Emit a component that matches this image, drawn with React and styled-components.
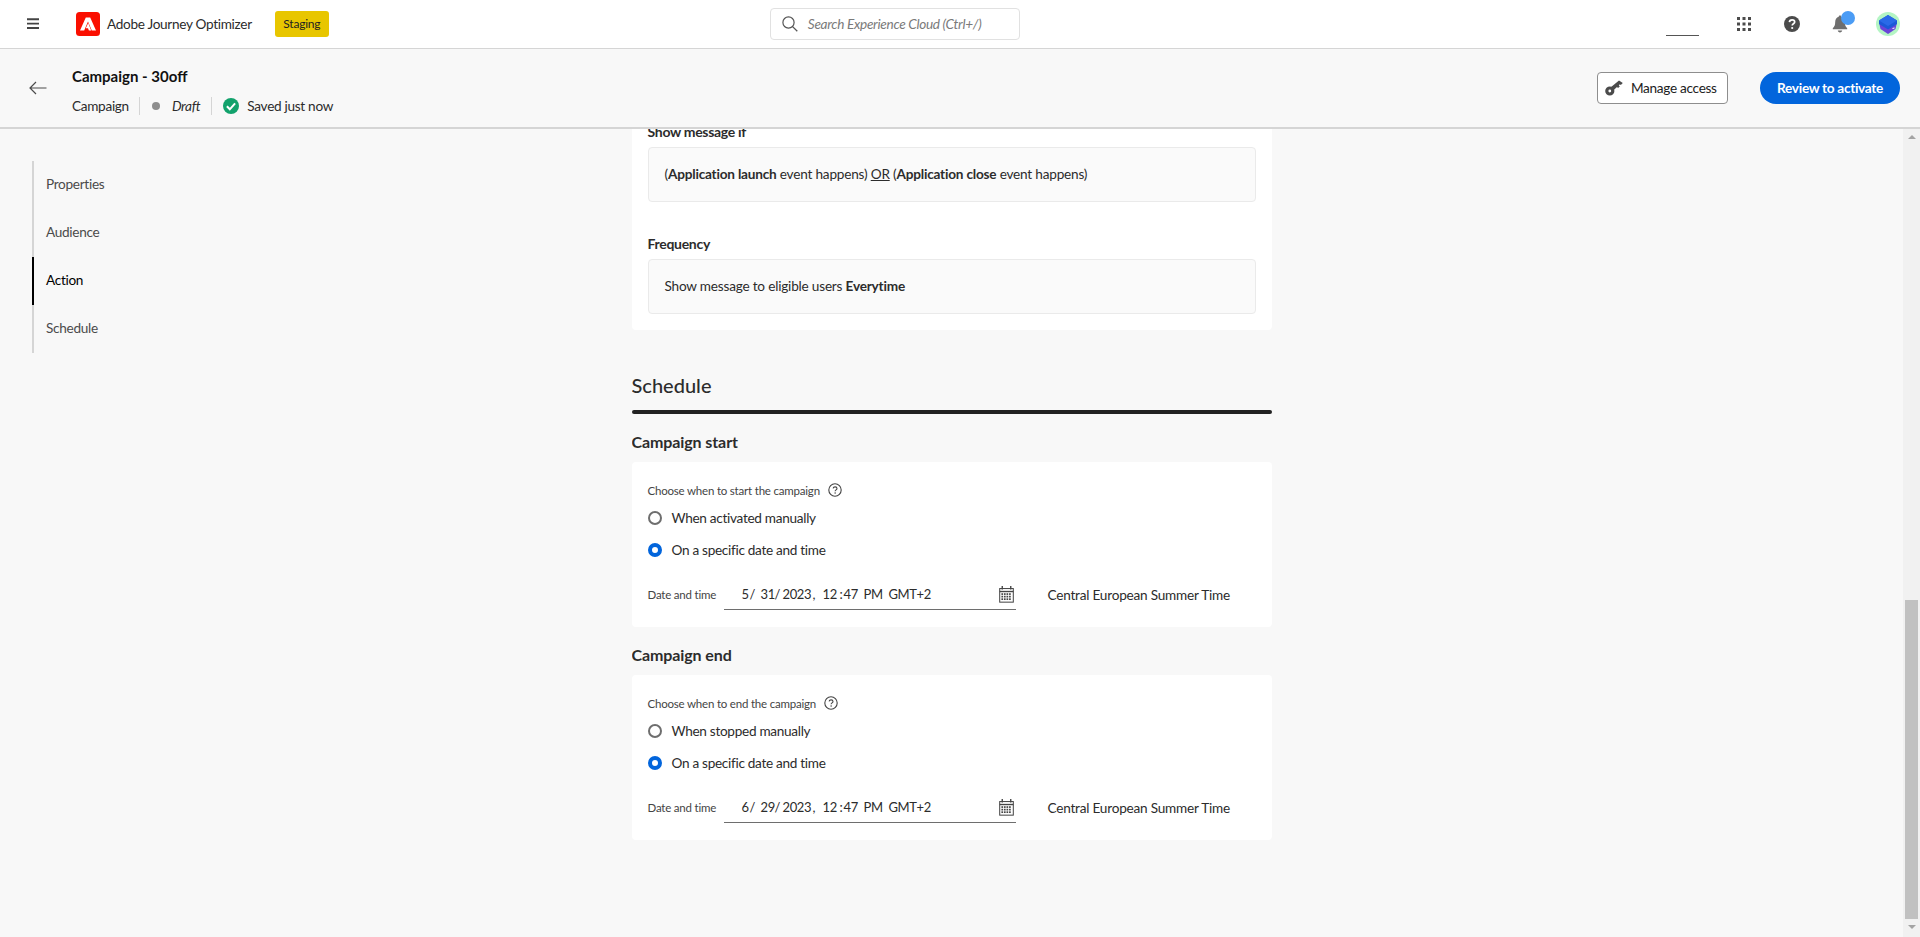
import React from "react"
import styled, { createGlobalStyle, css } from "styled-components"

const GlobalStyle = createGlobalStyle`
  html, body, #root {
    margin: 0;
    height: 100%;
  }
  body {
    font-family: "Lato", "Noto Sans", sans-serif;
    color: #2c2c2c;
    background: #f8f8f8;
  }
  * {
    box-sizing: border-box;
  }
`

// Lato runs wider than the font in the screenshot
const uiText = css`
  font-size: 13.6px;
  letter-spacing: -0.3px;
`

const smallText = css`
  font-size: 11.5px;
  letter-spacing: -0.2px;
`

const CalendarIcon = () => (
  <svg width="17" height="17" viewBox="0 0 18 20" fill="none">
    <path d="M4 0v4M14 0v4" stroke="#444" strokeWidth="1.6" />
    <rect x="1" y="3" width="16" height="16" fill="none" stroke="#444" strokeWidth="1.2" />
    <path d="M1 6.500h16" stroke="#444" strokeWidth="1.6" />
    {[8.5, 11.5, 14.5].map(y =>
      [3, 6, 9, 12].map(x => <rect key={`${x}-${y}`} x={x} y={y} width="2" height="2" fill="#444" />)
    )}
  </svg>
)

const InfoIcon = () => (
  <svg width="14" height="14" viewBox="0 0 14 14" fill="none">
    <circle cx="7" cy="7" r="6.200" stroke="#444" strokeWidth="1.1" />
    <path d="M5.100 5.400c.2-1 1-1.500 2-1.500 1.100 0 1.900.7 1.900 1.600 0 1.400-1.900 1.400-1.900 2.800" stroke="#444" strokeWidth="1.1" />
    <circle cx="7.100" cy="10.100" r=".75" fill="#444" />
  </svg>
)

const SchedulePicker = ({ name, question, manualLabel, month, day }) => (
  <>
    <SubHeading>{name}</SubHeading>
    <Card>
      <Question>{question}<InfoIcon /></Question>
      <RadioRow><Radio /><span>{manualLabel}</span></RadioRow>
      <RadioRow><Radio $checked /><span>On a specific date and time</span></RadioRow>
      <DateRow>
        <DateLabel>Date and time</DateLabel>
        <DateField>
          <DateText>
            <Segment $w={8}>{month}</Segment>
            <Segment $w={6}>/</Segment>
            <Segment $w={14} $gap={5}>{day}</Segment>
            <Segment $w={7}>/</Segment>
            <Segment $w={29} $gap={1}>2023</Segment>
            <Segment $w={10} $gap={1}>,</Segment>
            <Segment $w={16}>12</Segment>
            <Segment $w={4} $gap={1}>:</Segment>
            <Segment $w={16}>47</Segment>
            <Segment $w={20} $gap={4}>PM</Segment>
            <Segment $w={44} $gap={5}>GMT+2</Segment>
          </DateText>
          <CalendarIcon />
        </DateField>
        <TimeZone>Central European Summer Time</TimeZone>
      </DateRow>
    </Card>
  </>
)

const App = () => (
  <Page>
    <GlobalStyle />
    <TopBar>
      <MenuIcon width="14" height="12" viewBox="0 0 14 12">
        <path d="M1 1.200h12M1 5.600h12M1 10h12" stroke="#444" strokeWidth="1.9" />
      </MenuIcon>
      <svg width="24" height="24" viewBox="0 0 24 24">
        <rect width="24" height="24" rx="3.500" fill="#fa0f00" />
        <path d="M9.800 5.500h4.400L20 18.500h-4.200L12 9.500l-3.800 9H4z" fill="#fff" />
        <path d="M12.200 11l3 7.500h-2.300l-.9-2.300H9.800z" fill="#fff" />
      </svg>
      <ProductName>Adobe Journey Optimizer</ProductName>
      <EnvBadge>Staging</EnvBadge>
      <SearchBox>
        <svg width="16" height="16" viewBox="0 0 16 16" fill="none">
          <circle cx="6.500" cy="6.500" r="5.600" stroke="#555" strokeWidth="1.2" />
          <path d="M10.600 10.600l4.700 4.700" stroke="#555" strokeWidth="1.3" />
        </svg>
        <SearchHint>Search Experience Cloud (Ctrl+/)</SearchHint>
      </SearchBox>
      <TopActions>
        <UserStub />
        <AppsIcon width="16" height="16" viewBox="0 0 16 16">
          {[1, 6.5, 12].map(y =>
            [1, 6.5, 12].map(x => <rect key={`${x}-${y}`} x={x} y={y} width="3" height="3" fill="#4b4b4b" />)
          )}
        </AppsIcon>
        <HelpIcon width="16" height="16" viewBox="0 0 16 16">
          <circle cx="8" cy="8" r="8" fill="#4b4b4b" />
          <path d="M5.400 6.100c.1-1.500 1.200-2.300 2.700-2.300 1.500 0 2.600.9 2.600 2.100 0 1.900-2.500 1.800-2.500 3.600" fill="none" stroke="#fff" strokeWidth="1.7" />
          <circle cx="8.200" cy="12" r="1.100" fill="#fff" />
        </HelpIcon>
        <BellWrap>
          <svg width="16" height="18" viewBox="0 0 16 18">
            <path d="M8 .5c.8 0 1.300.5 1.300 1.200 2.400.6 3.500 2.700 3.500 5.300 0 3 .8 4.600 2.400 6.300v.9H.8v-.9C2.400 11.600 3.200 10 3.200 7c0-2.600 1.100-4.700 3.500-5.300C6.700 1 7.200.5 8 .5z" fill="#6e6e6e" />
            <path d="M5.800 15.500h4.400c0 1.100-1 1.900-2.200 1.900s-2.200-.8-2.200-1.900z" fill="#6e6e6e" />
          </svg>
          <BellDot />
        </BellWrap>
        <svg width="24" height="24" viewBox="0 0 24 24">
          <circle cx="12" cy="12" r="12" fill="#b4f5c4" />
          <path d="M12 14l-9 -3.500 1.500 6.500L12 22l7.500-5 1.500-6.500z" fill="#6a45d8" />
          <path d="M12 3l9 5.500v3.500L12 17.500 3 12V8.500z" fill="#1c58d8" />
          <path d="M12 3l9 5.500-9 5.500-9-5.500z" fill="#2a6ae8" />
          <path d="M16 16.500l2-1 1 .6-2 1z" fill="#fff" />
        </svg>
      </TopActions>
    </TopBar>

    <SubBar>
      <BackIcon width="18" height="14" viewBox="0 0 18 14" fill="none">
        <path d="M17.500 7H1M7 1L1 7l6 6" stroke="#4b4b4b" strokeWidth="1.2" />
      </BackIcon>
      <TitleBlock>
        <Title>Campaign - 30off</Title>
        <MetaRow>
          <MetaItem>Campaign</MetaItem>
          <MetaItem $gap={12}>
            <StatusDot />
            <em>Draft</em>
          </MetaItem>
          <MetaItem $gap={8}>
            <svg width="16" height="16" viewBox="0 0 16 16">
              <circle cx="8" cy="8" r="8" fill="#12a26c" />
              <path d="M3.900 8.300l2.900 3 5.300-6" fill="none" stroke="#fff" strokeWidth="2" />
            </svg>
            Saved just now
          </MetaItem>
        </MetaRow>
      </TitleBlock>
      <ManageButton>
        <svg width="18" height="16" viewBox="0 0 18 16">
          <circle cx="4.800" cy="11" r="3" fill="none" stroke="#4b4b4b" strokeWidth="3.200" />
          <path d="M5.500 7.500L14 .5 17.800 3 15.800 5 14.800 4.200 13.800 5.400 14.800 6.500 13 8 12 6.900 8.500 10.300z" fill="#4b4b4b" />
        </svg>
        Manage access
      </ManageButton>
      <ReviewButton>Review to activate</ReviewButton>
    </SubBar>

    <Body>
      <Workspace>
        <SideColumn>
          <SideNav>
            <NavItem>Properties</NavItem>
            <NavItem>Audience</NavItem>
            <NavItem $active>Action</NavItem>
            <NavItem>Schedule</NavItem>
          </SideNav>
        </SideColumn>
        <MainColumn>
          <ActionCard>
            <FieldLabel>Show message if</FieldLabel>
            <ReadOnlyBox>
              <span>(<b>Application launch</b> event happens) <u>OR</u> (<b>Application close</b> event happens)</span>
            </ReadOnlyBox>
            <FieldLabel $spaced>Frequency</FieldLabel>
            <ReadOnlyBox>
              <span>Show message to eligible users <b>Everytime</b></span>
            </ReadOnlyBox>
          </ActionCard>
          <SectionTitle>Schedule</SectionTitle>
          <SectionRule />
          <SchedulePicker
            name="Campaign start"
            question="Choose when to start the campaign"
            manualLabel="When activated manually"
            month="5"
            day="31"
          />
          <SchedulePicker
            name="Campaign end"
            question="Choose when to end the campaign"
            manualLabel="When stopped manually"
            month="6"
            day="29"
          />
        </MainColumn>
      </Workspace>
      <ScrollTrack>
        <ScrollArrow $up />
        <ScrollThumb />
        <ScrollArrow />
      </ScrollTrack>
    </Body>
  </Page>
)

export default App

const Page = styled.div`
  display: flex;
  flex-direction: column;
  height: 100vh;
  overflow: hidden;
`

const TopBar = styled.header`
  display: flex;
  align-items: center;
  flex: none;
  height: 49px;
  padding: 0 20px 1px 26px;
  background: #fff;
  border-bottom: 1px solid #d5d5d5;
`

const MenuIcon = styled.svg`
  margin-right: 36px;
`

const ProductName = styled.span`
  ${uiText}
  margin-left: 7px;
  color: #2c2c2c;
`

const EnvBadge = styled.span`
  display: flex;
  align-items: center;
  justify-content: center;
  width: 54px;
  height: 26px;
  margin-left: 23px;
  border-radius: 3px;
  background: #e8c600;
  font-size: 12px;
  letter-spacing: -0.2px;
  color: #222;
`

const SearchBox = styled.div`
  display: flex;
  align-items: center;
  gap: 10px;
  width: 250px;
  height: 32px;
  margin-left: 441px;
  padding-left: 11px;
  border: 1px solid #e1e1e1;
  border-radius: 4px;
`

const SearchHint = styled.span`
  ${uiText}
  font-style: italic;
  color: #7a7a7a;
`

const TopActions = styled.div`
  display: flex;
  align-items: center;
  margin-left: auto;
`

const UserStub = styled.span`
  align-self: flex-end;
  width: 33px;
  height: 1px;
  margin-right: 37px;
  background: #555;
`

const AppsIcon = styled.svg`
  margin-right: 32px;
`

const HelpIcon = styled.svg`
  margin-right: 32px;
`

const BellWrap = styled.span`
  position: relative;
  display: flex;
  margin-right: 28px;
`

const BellDot = styled.span`
  position: absolute;
  top: -4px;
  right: -7px;
  width: 14px;
  height: 14px;
  border-radius: 50%;
  background: #4b9cf5;
`

const SubBar = styled.div`
  display: flex;
  align-items: center;
  flex: none;
  height: 80px;
  padding: 0 20px 0 29px;
  background: #f8f8f8;
  border-bottom: 2px solid #d5d5d5;
`

const BackIcon = styled.svg`
  margin-right: 25px;
`

const TitleBlock = styled.div`
  display: flex;
  flex-direction: column;
  gap: 12px;
  margin-top: 6px;
  margin-right: auto;
`

const Title = styled.div`
  font-size: 15px;
  font-weight: 700;
  color: #111;
`

const MetaRow = styled.div`
  display: flex;
  align-items: center;
`

const MetaItem = styled.span`
  ${uiText}
  display: flex;
  align-items: center;
  gap: ${p => p.$gap || 0}px;
  height: 18px;
  padding: 0 10.5px 0 11.5px;
  color: #2c2c2c;
  border-left: 1px solid #d5d5d5;

  &:first-child {
    padding-left: 0;
    border-left: none;
  }
`

const StatusDot = styled.i`
  width: 8px;
  height: 8px;
  border-radius: 50%;
  background: #8e8e8e;
`

const ManageButton = styled.button`
  ${uiText}
  display: flex;
  align-items: center;
  gap: 8px;
  width: 131px;
  height: 32px;
  margin-right: 32px;
  padding: 0 0 0 7px;
  border: 1px solid #8e8e8e;
  border-radius: 4px;
  background: #fff;
  font-family: inherit;
  color: #222;
`

const ReviewButton = styled.button`
  ${uiText}
  width: 140px;
  height: 32px;
  border: none;
  border-radius: 16px;
  background: #0265dc;
  font-family: inherit;
  font-weight: 700;
  color: #fff;
`

const Body = styled.div`
  display: flex;
  flex: 1;
  min-height: 0;
`

const Workspace = styled.main`
  display: grid;
  grid-template-columns: 1fr 640px 1fr;
  grid-template-rows: minmax(0, 1fr);
  flex: 1;
  min-width: 0;
`

const ScrollTrack = styled.div`
  display: flex;
  flex-direction: column;
  align-items: center;
  flex: none;
  width: 17px;
  background: #f1f1f1;
`

const ScrollThumb = styled.div`
  flex: none;
  width: 13px;
  height: 319px;
  margin-top: auto;
  background: #c1c1c1;
`

const ScrollArrow = styled.span`
  flex: none;
  width: 0;
  height: 0;
  border-left: 4px solid transparent;
  border-right: 4px solid transparent;
  ${p => (p.$up
    ? css`
        margin-top: 6px;
        border-bottom: 4px solid #a3a3a3;
      `
    : css`
        margin: 6px 0 8px;
        border-top: 4px solid #a3a3a3;
      `)}
`

const SideColumn = styled.aside`
  padding: 32px 0 0 32px;
`

const SideNav = styled.nav`
  display: flex;
  flex-direction: column;
  width: 160px;
`

const NavItem = styled.a`
  ${uiText}
  display: flex;
  align-items: center;
  height: 48px;
  padding: 0 0 2px 12px;
  border-left: 2px solid ${p => (p.$active ? "#000" : "#d5d5d5")};
  color: ${p => (p.$active ? "#000" : "#4b4b4b")};
`

const MainColumn = styled.div`
  display: flex;
  flex-direction: column;
  justify-content: flex-end;
  min-height: 0;
  padding-bottom: 97px;
  overflow: hidden;

  > * {
    flex: none;
  }
`

const ActionCard = styled.section`
  padding: 16px;
  background: #fff;
  border-radius: 0 0 4px 4px;
`

const FieldLabel = styled.div`
  margin: ${p => (p.$spaced ? "33px" : "0")} 0 6px;
  font-size: 14px;
  line-height: 18px;
  font-weight: 700;
  letter-spacing: -0.3px;
  color: #2c2c2c;
`

const ReadOnlyBox = styled.div`
  display: flex;
  align-items: center;
  height: 55px;
  padding: 0 0 2px 16px;
  border: 1px solid #eaeaea;
  border-radius: 4px;
  background: #fafafa;
  font-size: 13.6px;
  letter-spacing: -0.2px;
  color: #2c2c2c;
`

const SectionTitle = styled.h2`
  margin: 43px 0 0;
  font-size: 20px;
  line-height: 24px;
  font-weight: 500;
  color: #2c2c2c;
`

const SectionRule = styled.div`
  height: 4px;
  margin: 13px 0 19px;
  border-radius: 2px;
  background: #222;
`

const SubHeading = styled.h3`
  margin: 0 0 11px;
  font-size: 16px;
  line-height: 18px;
  font-weight: 700;
  letter-spacing: -0.1px;
  color: #2c2c2c;
`

const Card = styled.section`
  display: flex;
  flex-direction: column;
  height: 165px;
  margin-bottom: 19px;
  padding: 20px 16px 0;
  background: #fff;
  border-radius: 4px;

  &:last-child {
    margin-bottom: 0;
  }
`

const Question = styled.div`
  ${smallText}
  display: flex;
  align-items: center;
  gap: 8px;
  height: 16px;
  margin-bottom: 4px;
  color: #444;
`

const RadioRow = styled.label`
  ${uiText}
  display: flex;
  align-items: center;
  gap: 10px;
  height: 32px;
  color: #2c2c2c;
`

const Radio = styled.i`
  width: 14px;
  height: 14px;
  border-radius: 50%;
  background: ${p => (p.$checked ? "#fff" : "transparent")};
  border: ${p => (p.$checked ? "4.5px solid #0265dc" : "2px solid #6e6e6e")};
`

const DateRow = styled.div`
  display: flex;
  align-items: center;
  height: 36px;
  margin-top: 8px;
`

const DateLabel = styled.span`
  ${smallText}
  width: 76px;
  padding-top: 5px;
  color: #444;
`

const DateField = styled.div`
  display: flex;
  align-items: center;
  justify-content: space-between;
  width: 292px;
  height: 36px;
  padding: 5px 1px 0 18px;
  border-bottom: 1px solid #6e6e6e;
`

const DateText = styled.span`
  display: flex;
  font-size: 13px;
  letter-spacing: -0.4px;
  color: #2c2c2c;
`

const Segment = styled.span`
  width: ${p => p.$w}px;
  margin-left: ${p => p.$gap || 0}px;
`

const TimeZone = styled.span`
  ${uiText}
  margin-left: 32px;
  padding-top: 5px;
  letter-spacing: -0.22px;
  color: #2c2c2c;
`
